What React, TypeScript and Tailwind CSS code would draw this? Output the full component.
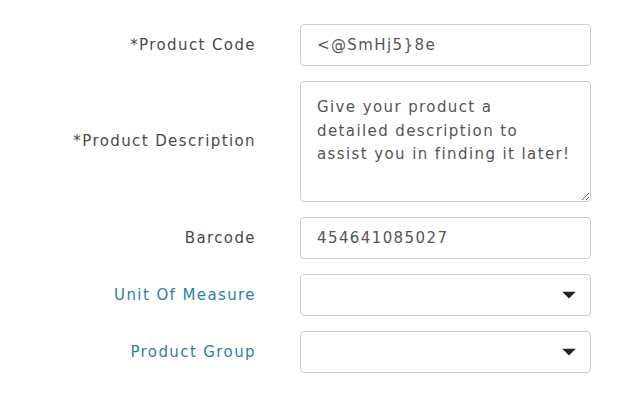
import React from "react";

const labelBase =
  "text-right text-[15px] tracking-[1.4px] font-['DejaVu_Sans',sans-serif]";
const fieldBase =
  "w-full h-[42px] rounded-[4px] border border-[#cccccc] bg-white px-[16px] text-[15px] tracking-[1.4px] text-[#555555] font-['DejaVu_Sans',sans-serif] outline-none";

function Caret() {
  return (
    <svg width="14" height="7" viewBox="0 0 14 7" className="absolute right-[15px] top-1/2 -translate-y-1/2 pointer-events-none">
      <path d="M0 0 H14 L7 7 Z" fill="#222222" />
    </svg>
  );
}

export default function App() {
  return (
    <div className="w-[640px] h-[400px] bg-white pt-[24px]">
      <div className="grid grid-cols-[256px_291px] gap-x-[44px] gap-y-[15px] items-center">
        <label className={`${labelBase} text-[#4a4a4a]`}>*Product Code</label>
        <input className={fieldBase} defaultValue="<@SmHj5}8e" />

        <label className={`${labelBase} text-[#4a4a4a]`}>*Product Description</label>
        <textarea
          className="w-full h-[121px] rounded-[4px] border border-[#cccccc] bg-white pl-[16px] pr-[6px] pt-[14px] text-[15px] leading-[23.5px] tracking-[1.4px] text-[#555555] font-['DejaVu_Sans',sans-serif] outline-none"
          defaultValue={"Give your product a\ndetailed description to\nassist you in finding it later!"}
        />

        <label className={`${labelBase} text-[#4a4a4a]`}>Barcode</label>
        <input className={fieldBase} defaultValue="454641085027" />

        <label className={`${labelBase} text-[#2f7ea6]`}>Unit Of Measure</label>
        <div className="relative">
          <div className={fieldBase} />
          <Caret />
        </div>

        <label className={`${labelBase} text-[#2f7ea6]`}>Product Group</label>
        <div className="relative">
          <div className={fieldBase} />
          <Caret />
        </div>
      </div>
    </div>
  );
}
